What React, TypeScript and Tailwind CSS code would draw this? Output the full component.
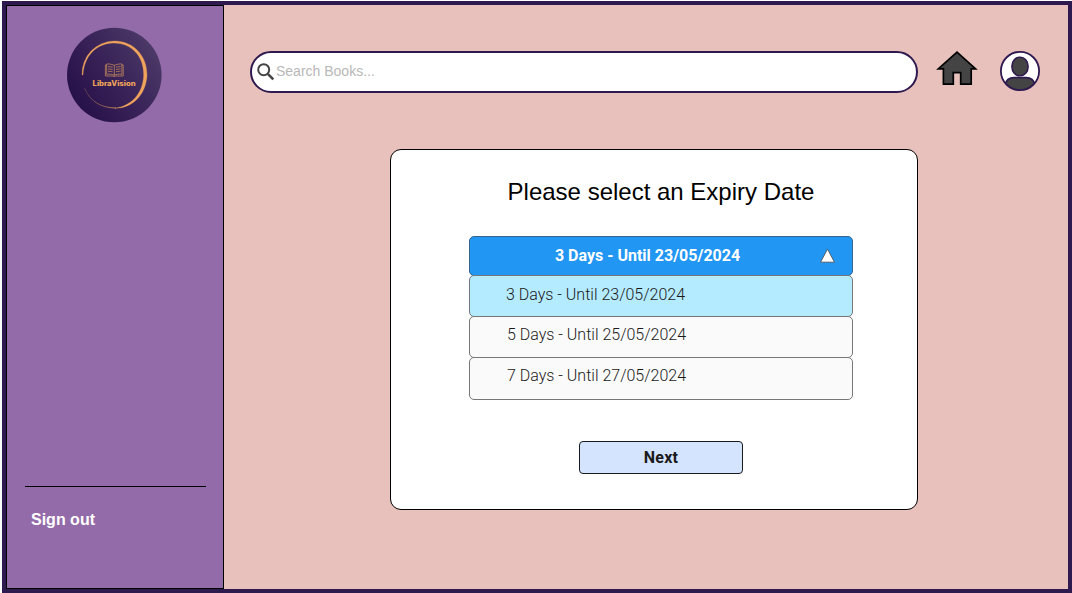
import React from "react";

const options = [
  { label: "3 Days - Until 23/05/2024", row: "h-[42px] bg-[#b5ebff] pl-[36px] pb-[2px]" },
  { label: "5 Days - Until 25/05/2024", row: "h-[42px] bg-[#fafafa] pl-[37px] pb-[4px]" },
  { label: "7 Days - Until 27/05/2024", row: "h-[43px] bg-[#fafafa] pl-[37px] pb-[6px]" },
];

function Logo() {
  return (
    <svg width="96" height="96" viewBox="0 0 96 96">
      <defs>
        <linearGradient id="disc" x1="0.1" y1="0.75" x2="0.9" y2="0.2">
          <stop offset="0" stopColor="#28124a" />
          <stop offset="0.5" stopColor="#392358" />
          <stop offset="1" stopColor="#4b3967" />
        </linearGradient>
        <linearGradient id="tail" gradientUnits="userSpaceOnUse" x1="52" y1="80" x2="18" y2="60">
          <stop offset="0" stopColor="#f0a45b" />
          <stop offset="0.3" stopColor="#a87055" />
          <stop offset="1" stopColor="#5c3b53" />
        </linearGradient>
      </defs>
      <circle cx="48.3" cy="48" r="47.3" fill="url(#disc)" />
      <path
        d="M16.1 48A32.5 32.5 0 0 1 48.5 14C67.5 14 81.5 29 81 49C79.5 69 65.5 81.5 49 81.2C65 79 77 67 77.7 48C78 29 65.5 16 47.5 16C30.5 16.2 18 29 17 48Z"
        fill="#f0a45b"
        stroke="#f0a45b"
        strokeWidth="0.3"
      />
      <path d="M50 81C36 81 24 75 18.5 61" fill="none" stroke="url(#tail)" strokeWidth="0.8" />
      <g fill="none" stroke="#c98c5e" strokeWidth="0.75">
        <path d="M48.3 38.3C45 37 42 36.8 40.7 37V47.3C44 46.8 46 47.3 48.3 48.2C50.6 47.3 52.6 46.8 55.9 47.3V37C54.6 36.8 51.6 37 48.3 38.3V48.5" />
        <path d="M40.7 38H39.4V49H47L48.3 49.6L49.6 49H57.2V38H55.9" />
        <path d="M42 39.5L46.7 40.2M42 41.8L46.7 42.5M42 44.1L46.7 44.8M54.6 39.5L49.9 40.2M54.6 41.8L49.9 42.5M54.6 44.1L49.9 44.8" />
      </g>
      <text
        x="26.6"
        y="58.6"
        textLength="43"
        lengthAdjust="spacingAndGlyphs"
        fill="#f0a45b"
        fontSize="7.2"
        className="font-['Inter',sans-serif] font-extrabold"
      >
        LibraVision
      </text>
    </svg>
  );
}

function SearchIcon() {
  return (
    <svg width="18" height="18" viewBox="0 0 18 18" fill="none" stroke="#444">
      <circle cx="6.7" cy="6.7" r="5.5" strokeWidth="2" />
      <path d="M10.8 10.8L16.3 16.3" strokeWidth="2.6" />
    </svg>
  );
}

function HomeIcon() {
  return (
    <svg width="42" height="36" viewBox="0 0 42 36" className="overflow-visible">
      <path
        d="M21 1.2L39.6 17.8H35.2V33.2H24.7V21.6H17.3V33.2H7.4V17.8H2.3Z"
        fill="#444"
        stroke="#000"
        strokeWidth="1.7"
      />
    </svg>
  );
}

function ProfileIcon() {
  return (
    <svg width="40" height="40" viewBox="0 0 40 40">
      <defs>
        <clipPath id="avatar">
          <circle cx="20" cy="20" r="19" />
        </clipPath>
      </defs>
      <circle cx="20" cy="20" r="19" fill="#fff" />
      <g clipPath="url(#avatar)" fill="#444" stroke="#2e1a4f" strokeWidth="1.6">
        <path d="M5 42V34Q6.5 26.6 14 26.6H26Q33.5 26.6 35 34V42Z" />
        <rect x="12" y="6.2" width="16" height="18.6" rx="7.8" ry="8.6" />
      </g>
      <circle cx="20" cy="20" r="19.1" fill="none" stroke="#2e1a4f" strokeWidth="1.8" />
    </svg>
  );
}

export default function App() {
  return (
    <div className="h-[593px] w-[1072px] overflow-hidden bg-white pt-px pl-[2px] font-['Liberation_Sans',sans-serif]">
      <div className="flex h-[592px] w-[1070px] border-4 border-[#2e1a4f] bg-[#e8c1bc]">
        <aside className="flex w-[218px] shrink-0 flex-col border border-black bg-[#946ba9]">
          <div className="mt-[21px] ml-[59px]">
            <Logo />
          </div>
          <div className="mt-auto mr-[17px] ml-[18px] h-px bg-black" />
          <button className="mt-[21px] mb-[56px] ml-[24px] self-start text-base leading-6 font-bold text-white">
            Sign out
          </button>
        </aside>

        <main className="flex flex-1 flex-col pt-[46px] pl-[26px]">
          <header className="flex items-start">
            <label className="flex h-[42px] w-[668px] items-center rounded-full border-2 border-[#2e1a4f] bg-white pl-[5px]">
              <SearchIcon />
              <span className="ml-px pb-[2px] text-[14px] leading-5 text-[#b8b8b8]">Search Books...</span>
            </label>
            <div className="ml-[18px]">
              <HomeIcon />
            </div>
            <div className="ml-[22px]">
              <ProfileIcon />
            </div>
          </header>

          <section className="mt-[56px] ml-[140px] flex h-[361px] w-[528px] flex-col items-center rounded-[11px] border border-black bg-white pl-[14px]">
            <h1 className="mt-[26px] text-[24px] leading-8 text-black">Please select an Expiry Date</h1>

            <div className="mt-[28px] flex w-[384px] flex-col font-['Roboto',sans-serif] text-base">
              <div className="flex h-[40px] items-center rounded-[5px] border border-[#36648b] bg-[#2196f3] pr-[17px] pb-px font-bold text-white">
                <span className="flex-1 pl-[6px] text-center">3 Days - Until 23/05/2024</span>
                <svg width="16" height="16" viewBox="0 0 16 16">
                  <path d="M8.5 1L15.5 14.2H1.5Z" fill="#fff" stroke="#4a5f70" strokeWidth="1" />
                </svg>
              </div>
              {options.map((option) => (
                <div
                  key={option.label}
                  className={`-mt-px flex items-center rounded-[5px] border border-[#777] font-light text-[#1a1a1a] ${option.row}`}
                >
                  {option.label}
                </div>
              ))}
            </div>

            <button className="mt-[41px] h-[33px] w-[164px] rounded-[4px] border border-[#1a1a1a] bg-[#d4e4ff] font-['Roboto',sans-serif] text-base font-bold tracking-[0.2px] text-[#1a1a1a]">
              Next
            </button>
          </section>
        </main>
      </div>
    </div>
  );
}
